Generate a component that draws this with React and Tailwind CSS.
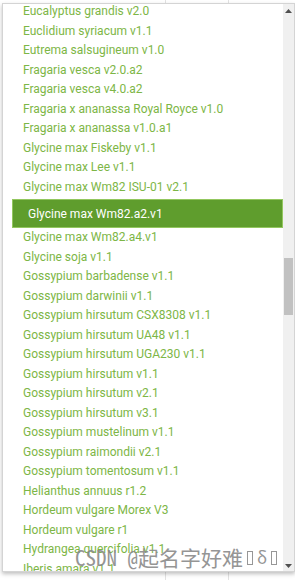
import React from "react";

const species = [
  "Eucalyptus grandis v2.0",
  "Euclidium syriacum v1.1",
  "Eutrema salsugineum v1.0",
  "Fragaria vesca v2.0.a2",
  "Fragaria vesca v4.0.a2",
  "Fragaria x ananassa Royal Royce v1.0",
  "Fragaria x ananassa v1.0.a1",
  "Glycine max Fiskeby v1.1",
  "Glycine max Lee v1.1",
  "Glycine max Wm82 ISU-01 v2.1",
  "Glycine max Wm82.a2.v1",
  "Glycine max Wm82.a4.v1",
  "Glycine soja v1.1",
  "Gossypium barbadense v1.1",
  "Gossypium darwinii v1.1",
  "Gossypium hirsutum CSX8308 v1.1",
  "Gossypium hirsutum UA48 v1.1",
  "Gossypium hirsutum UGA230 v1.1",
  "Gossypium hirsutum v1.1",
  "Gossypium hirsutum v2.1",
  "Gossypium hirsutum v3.1",
  "Gossypium mustelinum v1.1",
  "Gossypium raimondii v2.1",
  "Gossypium tomentosum v1.1",
  "Helianthus annuus r1.2",
  "Hordeum vulgare Morex V3",
  "Hordeum vulgare r1",
  "Hydrangea quercifolia v1.1",
  "Iberis amara v1.1",
];

const selected = "Glycine max Wm82.a2.v1";

function Scrollbar() {
  return (
    <div className="w-[11px] bg-[#f0f0f0] flex flex-col items-center">
      <svg width="7" height="4" viewBox="0 0 7 4" className="mt-[5px]">
        <path d="M0 4 L3.5 0 L7 4 Z" fill="#505050" />
      </svg>
      <div className="w-[9px] h-[57px] bg-[#c1c1c1] mt-[245px]" />
      <div className="flex-1" />
      <svg width="7" height="4" viewBox="0 0 7 4" className="mb-[3px]">
        <path d="M0 0 L7 0 L3.5 4 Z" fill="#505050" />
      </svg>
    </div>
  );
}

// missing-glyph boxes of the watermark
function Tofu() {
  return <span className="inline-block w-[6px] h-[14px] border border-[#8c8c8c] mx-[2px]" />;
}

export default function App() {
  return (
    <div className="relative w-[295px] h-[580px] overflow-hidden bg-white pt-[3px] pl-[2px]">
      {/* table lines behind the dropdown */}
      <div className="absolute left-[165px] top-0 h-full w-px bg-[#e2e2e2]" />
      <div className="absolute left-[228px] top-0 h-full w-px bg-[#e2e2e2]" />

      <div
        className="relative flex w-[293px] h-[569px] bg-white border border-[#d4d4d4] shadow-[0_2px_4px_rgba(0,0,0,0.25)]"
        style={{ fontFamily: "Roboto, 'Noto Sans', sans-serif" }}
      >
        <div className="flex-1 overflow-hidden">
          <div className="-mt-[2px]">
            {species.map((name) =>
              name === selected ? (
                <div
                  key={name}
                  className="mt-[2px] ml-[9px] h-[29px] flex items-center pl-[15px] bg-[#5f9d2d] border border-[#93c75f] text-white text-[12px]"
                >
                  {name}
                </div>
              ) : (
                <div
                  key={name}
                  className="h-[19.5px] leading-[19.5px] pl-[20px] text-[12px] text-[#7db646] whitespace-nowrap"
                >
                  {name}
                </div>
              )
            )}
          </div>
        </div>
        <Scrollbar />
      </div>

      <div
        className="absolute left-[75px] top-[547px] flex items-end leading-none text-[21px] text-[#8a8a8a] opacity-90 whitespace-nowrap pointer-events-none"
        style={{ fontFamily: "'Noto Sans Mono CJK SC', 'Noto Sans CJK SC', sans-serif" }}
      >
        <span>CSDN @起名字好难</span>
        <span className="flex items-end mb-[3px] ml-[2px]">
          <Tofu />
          <span className="text-[17px] leading-none mx-[2px]">δ</span>
          <Tofu />
        </span>
      </div>
    </div>
  );
}
